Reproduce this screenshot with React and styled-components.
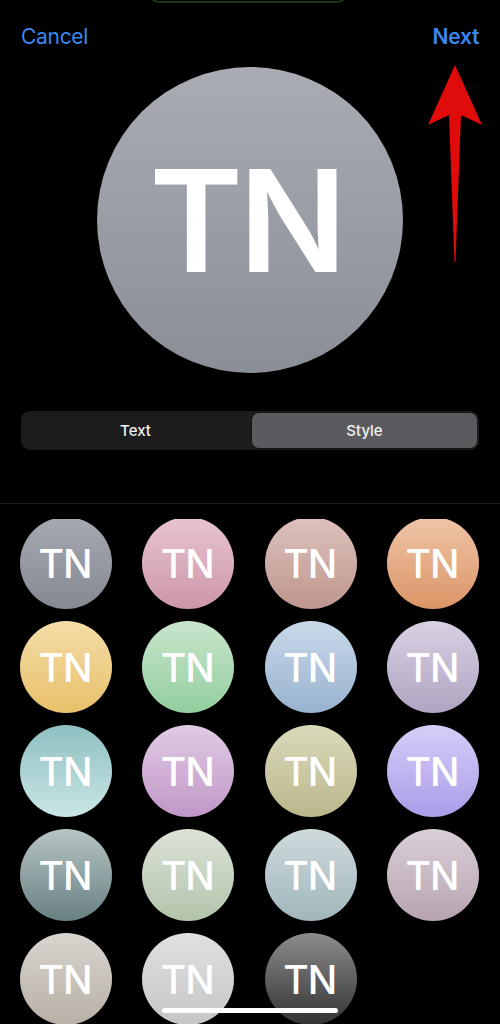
import React from 'react';
import styled, { createGlobalStyle } from 'styled-components';

const GlobalStyle = createGlobalStyle`
  html, body {
    margin: 0;
    padding: 0;
    background: #000;
  }
  body {
    font-family: Inter, "Noto Sans", "Liberation Sans", sans-serif;
    -webkit-font-smoothing: antialiased;
  }
`;

const styles = [
  ['#a5a9b2', '#858992'],
  ['#e7c4d0', '#cd96aa'],
  ['#ddc1bd', '#bd968e'],
  ['#efc5a8', '#db9566'],
  ['#f4dda8', '#e8c06a'],
  ['#c9e5cd', '#93ce9d'],
  ['#c9d9e9', '#98b2cf'],
  ['#d8d1e2', '#b0a4c2'],
  ['#8fc0c1', '#cae5e5'],
  ['#e1cbe4', '#c097c7'],
  ['#dad9ba', '#bbb78c'],
  ['#d6cef8', '#aa9ce8'],
  ['#b7c4c4', '#688083'],
  ['#dae2d6', '#b4c4ac'],
  ['#cfdadd', '#a0b6bb'],
  ['#dacfd7', '#b6a4b0'],
  ['#d8d4ce', '#b8b0a6'],
  ['#e0e0e0', '#c6c6c6'],
  ['#8c8c8c', '#323232'],
];

class App extends React.Component {
  constructor(props) {
    super(props);
    this.state = {
      tab: 'style'
    };
  }

  render() {
    return (
      <Screen>
        <GlobalStyle />
        <Island />
        <Header>
          <NavButton>Cancel</NavButton>
          <NavButton bold>Next</NavButton>
        </Header>

        <Preview>
          <BigAvatar>TN</BigAvatar>
        </Preview>

        <Segmented>
          <Segment active={this.state.tab === 'text'} onClick={() => this.setState({ tab: 'text' })}>Text</Segment>
          <Segment active={this.state.tab === 'style'} onClick={() => this.setState({ tab: 'style' })}>Style</Segment>
        </Segmented>

        <Divider />

        <Scroller>
          <Grid>
            {styles.map((pair, i) => (
              <Swatch key={i} top={pair[0]} bottom={pair[1]}>TN</Swatch>
            ))}
          </Grid>
        </Scroller>

        <Arrow width="60" height="200" viewBox="0 0 60 200">
          <path d="M28 0 L55 60 L34 50 L28.5 197 L27.5 197 L22 50 L1 60 Z" fill="#e00b0b" />
        </Arrow>

        <HomeBar />
      </Screen>
    );
  }
}

const Screen = styled.div`
  position: relative;
  width: 500px;
  height: 1024px;
  overflow: hidden;
  background: #000;
  display: flex;
  flex-direction: column;
`;

const Island = styled.div`
  align-self: center;
  width: 206px;
  height: 30px;
  margin-top: -27px;
  margin-left: -4px;
  border: 2px solid #1d3811;
  border-radius: 16px;
  box-sizing: border-box;
`;

const Header = styled.div`
  display: flex;
  justify-content: space-between;
  align-items: center;
  height: 64px;
  padding: 0 21px;
`;

const NavButton = styled.div`
  color: #3a87f0;
  font-size: 21px;
  font-weight: ${props => props.bold ? 600 : 400};
  letter-spacing: -0.3px;
  line-height: 28px;
  margin-top: 4px;
`;

const Preview = styled.div`
  display: flex;
  justify-content: center;
`;

const BigAvatar = styled.div`
  width: 306px;
  height: 306px;
  border-radius: 50%;
  background: linear-gradient(180deg, #a9acb3 0%, #8a8e96 100%);
  display: flex;
  align-items: center;
  justify-content: center;
  color: #fff;
  font-size: 142px;
  font-weight: 600;
  letter-spacing: -4px;
  padding: 0 8px 0 0;
  box-sizing: border-box;
  line-height: 1;
`;

const Segmented = styled.div`
  margin: 38px 21px 0 21px;
  height: 39px;
  padding: 2px;
  box-sizing: border-box;
  border-radius: 9px;
  background: #1c1c1e;
  display: grid;
  grid-template-columns: 1fr 1fr;
  column-gap: 4px;
`;

const Segment = styled.div`
  display: flex;
  align-items: center;
  justify-content: center;
  border-radius: 7px;
  color: #f2f2f2;
  font-size: 15px;
  font-weight: 500;
  background: ${props => props.active ? '#5b5b5f' : 'transparent'};
  box-shadow: ${props => props.active ? '0 0 0 0.5px rgba(0,0,0,0.4)' : 'none'};
`;

const Divider = styled.div`
  height: 1px;
  margin-top: 53px;
  background: #1c1c1e;
`;

const Scroller = styled.div`
  flex: 1;
  margin-top: 15px;
  overflow: hidden;
`;

const Grid = styled.div`
  display: grid;
  grid-template-columns: repeat(4, 92px);
  justify-content: space-between;
  row-gap: 12px;
  padding: 0 21px 0 20px;
  margin-top: -2px;
`;

const Swatch = styled.div`
  width: 92px;
  height: 92px;
  border-radius: 50%;
  background: linear-gradient(180deg, ${props => props.top} 0%, ${props => props.bottom} 100%);
  display: flex;
  align-items: center;
  justify-content: center;
  color: #fff;
  font-size: 39px;
  font-weight: 500;
  letter-spacing: -1px;
  padding-right: 2px;
  box-sizing: border-box;
  line-height: 1;
`;

const Arrow = styled.svg`
  position: absolute;
  top: 65px;
  left: 427px;
`;

const HomeBar = styled.div`
  position: absolute;
  left: 162px;
  bottom: 11px;
  width: 176px;
  height: 5px;
  border-radius: 3px;
  background: #fff;
`;

export default App;
